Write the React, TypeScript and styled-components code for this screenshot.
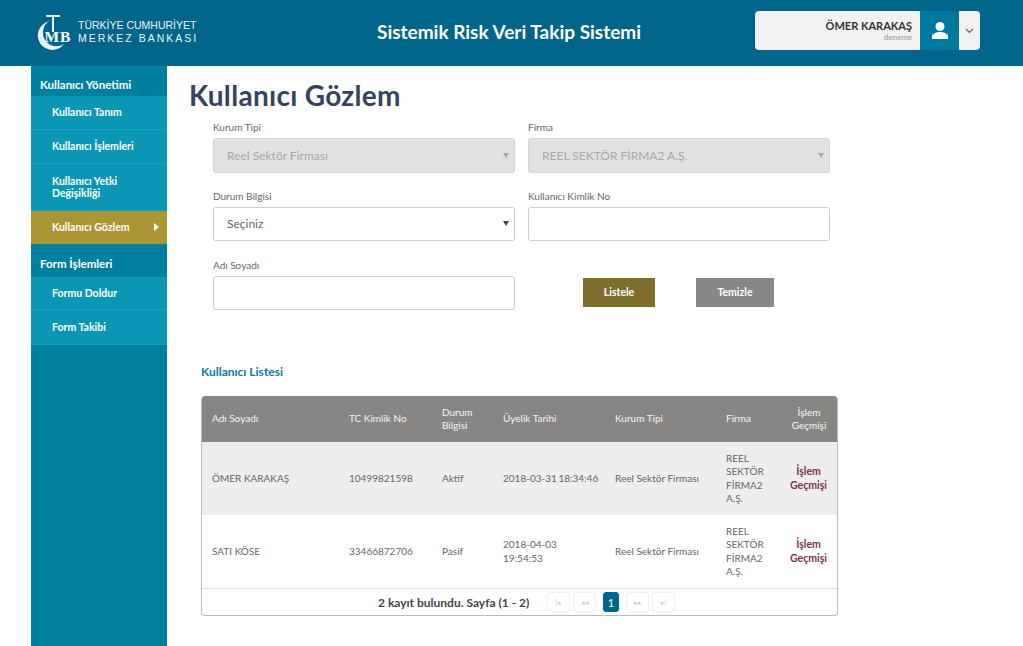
import * as React from 'react';
import styled, { createGlobalStyle } from 'styled-components';

const GlobalStyle = createGlobalStyle`
  html, body {
    margin: 0;
    padding: 0;
    background: #fff;
    font-family: Lato, "Open Sans", sans-serif;
  }
  * { box-sizing: border-box; }
`;

const Page = styled.div`
  width: 1023px;
  height: 646px;
  overflow: hidden;
  display: flex;
  flex-direction: column;
`;

const Header = styled.header`
  height: 66px;
  flex: none;
  background: #00658b;
  display: flex;
  align-items: flex-start;
  padding: 11px 43px 0 37px;
`;

const Logo = styled.div`
  width: 340px;
  display: flex;
  align-items: center;
  gap: 5px;
  padding-top: 3px;
`;

const LogoText = styled.div`
  color: #eef5f8;
  font-family: "Liberation Sans", sans-serif;
  font-size: 10.5px;
  line-height: 13px;
  margin-top: -1px;
`;

const LogoLine = styled.div<{ $spacing: number }>`
  letter-spacing: ${(p) => p.$spacing}px;
  white-space: nowrap;
`;

const AppTitle = styled.h1`
  flex: 1;
  margin: 8px 0 0;
  text-align: left;
  color: #fff;
  font-size: 19px;
  line-height: 26px;
  font-weight: 700;
`;

const UserBox = styled.div`
  width: 225px;
  height: 39px;
  display: flex;
  background: #f1f1f1;
  border-radius: 4px;
  overflow: hidden;
`;

const UserInfo = styled.div`
  flex: 1;
  text-align: right;
  padding: 8px 8px 0 0;
`;

const UserName = styled.div`
  font-size: 11px;
  line-height: 13px;
  font-weight: 700;
  color: #333;
`;

const UserRole = styled.div`
  font-size: 8px;
  line-height: 11px;
  color: #999;
`;

const UserIcon = styled.div`
  width: 39px;
  background: #00789f;
  display: flex;
  align-items: center;
  justify-content: center;
`;

const UserCaret = styled.div`
  width: 21px;
  display: flex;
  align-items: center;
  justify-content: center;
`;

const Body = styled.div`
  flex: 1;
  display: flex;
  padding-left: 31px;
  min-height: 0;
`;

const Sidebar = styled.nav`
  width: 136px;
  flex: none;
  background: #00809f;
`;

const GroupTitle = styled.div<{ $height: number; $top: number }>`
  height: ${(p) => p.$height}px;
  padding: ${(p) => p.$top}px 0 0 9px;
  color: #fff;
  font-size: 11.5px;
  line-height: 14px;
  font-weight: 700;
`;

const NavItem = styled.a<{ $active?: boolean; $height: number }>`
  display: flex;
  align-items: center;
  justify-content: space-between;
  height: ${(p) => p.$height}px;
  padding: 0 8px 1px 21px;
  background: ${(p) => (p.$active ? '#ab9636' : '#0a97b5')};
  border-bottom: 1px solid ${(p) => (p.$active ? '#ab9636' : '#1aa3bf')};
  color: #fff;
  font-size: 10.5px;
  line-height: 12px;
  font-weight: 700;
`;

const NavArrow = styled.span`
  width: 0;
  height: 0;
  border-left: 5px solid #fff;
  border-top: 4px solid transparent;
  border-bottom: 4px solid transparent;
`;

const Main = styled.main`
  flex: 1;
  padding: 0 0 0 22px;
`;

const PageTitle = styled.h2`
  margin: 12px 0 0;
  font-size: 28px;
  line-height: 34px;
  font-weight: 700;
  letter-spacing: 0.3px;
  color: #36435f;
`;

const FormGrid = styled.div`
  display: grid;
  grid-template-columns: 302px 302px;
  column-gap: 13px;
  margin: 10px 0 0 24px;
`;

const Field = styled.div`
  height: 69px;
`;

const FieldLabel = styled.label`
  display: block;
  height: 16px;
  font-size: 10px;
  line-height: 11px;
  color: #666;
`;

const Control = styled.div<{ $disabled?: boolean }>`
  height: ${(p) => (p.$disabled ? 35 : 34)}px;
  display: flex;
  align-items: center;
  justify-content: space-between;
  padding: 0 5px 1px 13px;
  border: 1px solid ${(p) => (p.$disabled ? '#d4d4d4' : '#cfcfcf')};
  border-radius: 3px;
  background: ${(p) => (p.$disabled ? '#e1e1e1' : '#fff')};
  color: ${(p) => (p.$disabled ? '#a8a8a8' : '#666')};
  font-size: 12px;
`;

const SelectCaret = styled.span<{ $disabled?: boolean }>`
  width: 0;
  height: 0;
  border-top: 5px solid ${(p) => (p.$disabled ? '#a8a8a8' : '#444')};
  border-left: 3px solid transparent;
  border-right: 3px solid transparent;
`;

const ButtonRow = styled.div`
  display: flex;
  gap: 41px;
  padding: 18px 0 0 55px;
`;

const ActionButton = styled.button<{ $color: string; $width: number }>`
  width: ${(p) => p.$width}px;
  height: 29px;
  border: 0;
  padding: 0 0 2px;
  background: ${(p) => p.$color};
  color: #fff;
  font-family: inherit;
  font-size: 10.5px;
  font-weight: 700;
`;

const SectionTitle = styled.h3`
  margin: 36px 0 0 12px;
  font-size: 12px;
  line-height: 14px;
  font-weight: 700;
  color: #0b7a9c;
`;

const TableWrap = styled.div`
  width: 637px;
  margin: 17px 0 0 12px;
  border: 1px solid #bbb;
  border-top: 0;
  border-radius: 4px;
  overflow: hidden;
`;

const Table = styled.table`
  width: 100%;
  border-collapse: collapse;
  table-layout: fixed;
  font-size: 10px;
  line-height: 13.5px;
`;

const HeadCell = styled.th<{ $center?: boolean }>`
  height: 46px;
  padding: 0 ${(p) => (p.$center ? 0 : '10px')};
  background: #888685;
  color: #f4f4f4;
  font-weight: 400;
  text-align: ${(p) => (p.$center ? 'center' : 'left')};
`;

const Row = styled.tr<{ $odd?: boolean }>`
  background: ${(p) => (p.$odd ? '#eeeeee' : '#fff')};
`;

const Cell = styled.td`
  height: 73px;
  padding: 0 10px;
  color: #666;
`;

const DateCell = styled(Cell)`
  white-space: nowrap;
  word-spacing: -1px;
`;

const HistoryCell = styled.td`
  padding: 0 1px 0 0;
  text-align: center;
  font-size: 10.5px;
  color: #7b3350;
  font-weight: 700;
`;

const Footer = styled.div`
  height: 27px;
  border-top: 1px solid #ddd;
  display: flex;
  align-items: center;
  padding-left: 176px;
`;

const FooterText = styled.span`
  width: 169px;
  font-size: 12px;
  font-weight: 700;
  color: #444;
`;

const Pager = styled.div`
  display: flex;
  gap: 3px;
`;

const PageButton = styled.span<{ $active?: boolean }>`
  width: ${(p) => (p.$active ? 16 : 23)}px;
  height: 20px;
  margin: ${(p) => (p.$active ? '0 4px' : 0)};
  display: flex;
  align-items: center;
  justify-content: center;
  border: 1px solid ${(p) => (p.$active ? '#00658b' : '#f0f0f0')};
  border-radius: 3px;
  background: ${(p) => (p.$active ? '#00658b' : '#fff')};
  color: ${(p) => (p.$active ? '#fff' : '#ccc')};
  font-size: ${(p) => (p.$active ? 11 : 7)}px;
`;

const CmbLogo = () => (
  <svg width="36" height="36" viewBox="0 0 36 36">
    <path d="M12 7.300A14.500 14.500 0 1 0 27 30A13.600 13.600 0 0 1 12 7.300Z" fill="#eef5f8" />
    <path d="M9 1h14v2h-6v15h-2V3H9Z" fill="#eef5f8" />
    <text x="7.500" y="28" fontFamily="Liberation Serif, serif" fontSize="15.500" fontWeight="700" fill="#fff">M</text>
    <text x="23" y="28" fontFamily="Liberation Serif, serif" fontSize="15.500" fontWeight="700" fill="#fff">B</text>
  </svg>
);

const users = [
  { name: 'ÖMER KARAKAŞ', tc: '10499821598', status: 'Aktif', date: ['2018-03-31 18:34:46'] },
  { name: 'SATI KÖSE', tc: '33466872706', status: 'Pasif', date: ['2018-04-03', '19:54:53'] },
];

export default function App() {
  return (
    <Page>
      <GlobalStyle />
      <Header>
        <Logo>
          <CmbLogo />
          <LogoText>
            <LogoLine $spacing={0}>TÜRKİYE CUMHURİYET</LogoLine>
            <LogoLine $spacing={2}>MERKEZ BANKASI</LogoLine>
          </LogoText>
        </Logo>
        <AppTitle>Sistemik Risk Veri Takip Sistemi</AppTitle>
        <UserBox>
          <UserInfo>
            <UserName>ÖMER KARAKAŞ</UserName>
            <UserRole>deneme</UserRole>
          </UserInfo>
          <UserIcon>
            <svg width="18" height="17" viewBox="0 0 18 17" fill="#fff">
              <circle cx="9" cy="4.500" r="4.500" />
              <path d="M1 17v-2.500C1 11.500 5 10 9 10s8 1.500 8 4.500V17Z" />
            </svg>
          </UserIcon>
          <UserCaret>
            <svg width="9" height="6" viewBox="0 0 9 6" fill="none" stroke="#666" strokeWidth="1.200">
              <path d="M1 1l3.500 3.500L8 1" />
            </svg>
          </UserCaret>
        </UserBox>
      </Header>
      <Body>
        <Sidebar>
          <GroupTitle $height={30} $top={12}>Kullanıcı Yönetimi</GroupTitle>
          <NavItem $height={34}>Kullanıcı Tanım</NavItem>
          <NavItem $height={34}>Kullanıcı İşlemleri</NavItem>
          <NavItem $height={47}>Kullanıcı Yetki<br />Değişikliği</NavItem>
          <NavItem $height={33} $active>Kullanıcı Gözlem<NavArrow /></NavItem>
          <GroupTitle $height={33} $top={13}>Form İşlemleri</GroupTitle>
          <NavItem $height={33}>Formu Doldur</NavItem>
          <NavItem $height={35}>Form Takibi</NavItem>
        </Sidebar>
        <Main>
          <PageTitle>Kullanıcı Gözlem</PageTitle>
          <FormGrid>
            <Field>
              <FieldLabel>Kurum Tipi</FieldLabel>
              <Control $disabled>Reel Sektör Firması<SelectCaret $disabled /></Control>
            </Field>
            <Field>
              <FieldLabel>Firma</FieldLabel>
              <Control $disabled>REEL SEKTÖR FİRMA2 A.Ş.<SelectCaret $disabled /></Control>
            </Field>
            <Field>
              <FieldLabel>Durum Bilgisi</FieldLabel>
              <Control>Seçiniz<SelectCaret /></Control>
            </Field>
            <Field>
              <FieldLabel>Kullanıcı Kimlik No</FieldLabel>
              <Control />
            </Field>
            <Field>
              <FieldLabel>Adı Soyadı</FieldLabel>
              <Control />
            </Field>
            <ButtonRow>
              <ActionButton $color="#7d6f2b" $width={72}>Listele</ActionButton>
              <ActionButton $color="#888888" $width={78}>Temizle</ActionButton>
            </ButtonRow>
          </FormGrid>
          <SectionTitle>Kullanıcı Listesi</SectionTitle>
          <TableWrap>
            <Table>
              <colgroup>
                <col width="137" />
                <col width="93" />
                <col width="61" />
                <col width="112" />
                <col width="111" />
                <col width="63" />
                <col width="60" />
              </colgroup>
              <thead>
                <tr>
                  <HeadCell>Adı Soyadı</HeadCell>
                  <HeadCell>TC Kimlik No</HeadCell>
                  <HeadCell>Durum Bilgisi</HeadCell>
                  <HeadCell>Üyelik Tarihi</HeadCell>
                  <HeadCell>Kurum Tipi</HeadCell>
                  <HeadCell>Firma</HeadCell>
                  <HeadCell $center>İşlem<br />Geçmişi</HeadCell>
                </tr>
              </thead>
              <tbody>
                {users.map((u, i) => (
                  <Row key={u.tc} $odd={i === 0}>
                    <Cell>{u.name}</Cell>
                    <Cell>{u.tc}</Cell>
                    <Cell>{u.status}</Cell>
                    <DateCell>
                      {u.date.map((line) => (
                        <div key={line}>{line}</div>
                      ))}
                    </DateCell>
                    <Cell>Reel Sektör Firması</Cell>
                    <Cell>REEL<br />SEKTÖR<br />FİRMA2<br />A.Ş.</Cell>
                    <HistoryCell>İşlem<br />Geçmişi</HistoryCell>
                  </Row>
                ))}
              </tbody>
            </Table>
            <Footer>
              <FooterText>2 kayıt bulundu. Sayfa (1 - 2)</FooterText>
              <Pager>
                <PageButton>|◂</PageButton>
                <PageButton>◂◂</PageButton>
                <PageButton $active>1</PageButton>
                <PageButton>▸▸</PageButton>
                <PageButton>▸|</PageButton>
              </Pager>
            </Footer>
          </TableWrap>
        </Main>
      </Body>
    </Page>
  );
}
